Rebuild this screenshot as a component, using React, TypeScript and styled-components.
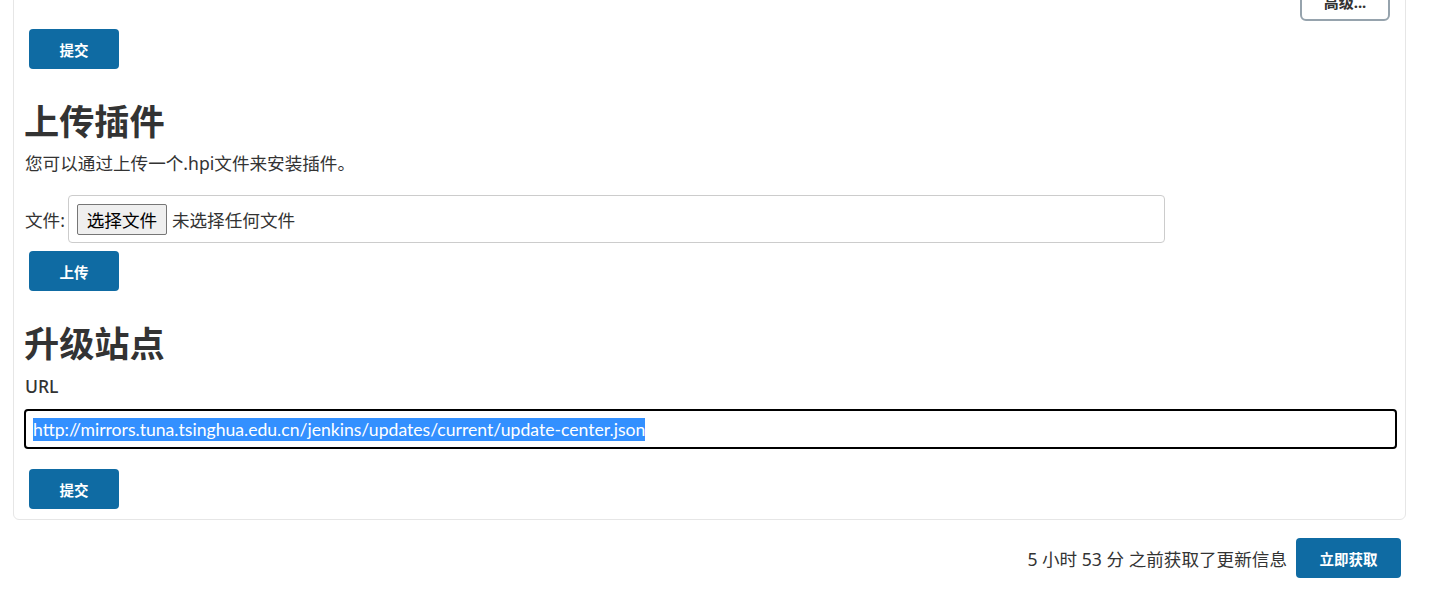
import React from "react";
import styled, { createGlobalStyle } from "styled-components";

const GlobalStyle = createGlobalStyle`
  html, body {
    margin: 0;
    padding: 0;
    background: #ffffff;
    overflow: hidden;
  }
  body {
    font-family: "Noto Sans", "Noto Sans CJK SC", sans-serif;
    font-size: 17.6px;
    color: #333333;
  }
`;

const Page = styled.div`
  display: flex;
  flex-direction: column;
  width: 1438px;
  height: 598px;
  overflow: hidden;
`;

const Card = styled.section`
  display: flex;
  flex-direction: column;
  align-items: flex-start;
  margin: -30px 0 0 13px;
  width: 1393px;
  box-sizing: border-box;
  padding: 0 10px 10px;
  border: 1px solid #e6e6e6;
  border-radius: 6px;
  background: #ffffff;
`;

const AdvancedRow = styled.div`
  display: flex;
  justify-content: flex-end;
  align-self: stretch;
  padding-right: 5px;
`;

const AdvancedButton = styled.button`
  width: 90px;
  height: 40px;
  margin-top: 10px;
  border: 2px solid #96a3ad;
  border-radius: 6px;
  background: #ffffff;
  color: #333333;
  font-family: "Noto Sans", "Noto Sans CJK SC", sans-serif;
  font-size: 15px;
  font-weight: 700;
`;

const PrimaryButton = styled.button<{ $top: number }>`
  display: flex;
  align-items: center;
  justify-content: center;
  width: 90px;
  height: 40px;
  margin: ${(p) => p.$top}px 0 0 5px;
  padding: 0;
  border: none;
  border-radius: 4px;
  background: #0f6ba3;
  color: #ffffff;
  font-family: "Noto Sans", "Noto Sans CJK SC", sans-serif;
  font-size: 14.5px;
  font-weight: 700;
  cursor: pointer;
`;

const Heading = styled.h2`
  margin: 31px 0 0 0;
  font-size: 35.2px;
  line-height: 42px;
  font-weight: 700;
  color: #333333;
`;

const Description = styled.p`
  margin: 8px 0 0 1px;
  line-height: 26px;
`;

const FileRow = styled.div`
  display: flex;
  align-items: center;
  gap: 3px;
  margin: 19px 0 0 1px;
`;

const FieldBox = styled.div`
  display: flex;
  align-items: center;
  gap: 5px;
  width: 1097px;
  height: 48px;
  box-sizing: border-box;
  padding: 0 8px;
  border: 1px solid #cccccc;
  border-radius: 4px;
`;

const ChooseButton = styled.span`
  display: flex;
  align-items: center;
  justify-content: center;
  width: 90px;
  height: 31px;
  box-sizing: border-box;
  border: 1px solid #767676;
  border-radius: 2px;
  background: #efefef;
  color: #000000;
  font-size: 17.6px;
`;

const NoFile = styled.span`
  color: #333333;
`;

const Label = styled.div`
  margin: 9px 0 0 1px;
  line-height: 26px;
  font-weight: 500;
`;

const UrlField = styled.div`
  display: flex;
  align-items: center;
  margin-top: 10px;
  width: 1373px;
  height: 40px;
  box-sizing: border-box;
  padding: 0 7px;
  border: 2px solid #000000;
  border-radius: 4px;
  font-family: "Lato", "Noto Sans", sans-serif;
  font-size: 17.6px;
`;

const Selected = styled.span`
  background: #3390ff;
  color: #ffffff;
  line-height: 23px;
`;

const Footer = styled.div`
  display: flex;
  justify-content: flex-end;
  align-items: center;
  gap: 9px;
  margin-top: 18px;
  padding-right: 37px;
`;

const Updated = styled.span`
  color: #333333;
`;

const FetchButton = styled(PrimaryButton)`
  width: 105px;
  margin: 0;
`;

export default function App() {
  return (
    <>
      <GlobalStyle />
      <Page>
        <Card>
          <AdvancedRow>
            <AdvancedButton>高级...</AdvancedButton>
          </AdvancedRow>
          <PrimaryButton $top={8}>提交</PrimaryButton>

          <Heading>上传插件</Heading>
          <Description>您可以通过上传一个.hpi文件来安装插件。</Description>
          <FileRow>
            <span>文件:</span>
            <FieldBox>
              <ChooseButton>选择文件</ChooseButton>
              <NoFile>未选择任何文件</NoFile>
            </FieldBox>
          </FileRow>
          <PrimaryButton $top={8}>上传</PrimaryButton>

          <Heading>升级站点</Heading>
          <Label>URL</Label>
          <UrlField>
            <Selected>
              http://mirrors.tuna.tsinghua.edu.cn/jenkins/updates/current/update-center.json
            </Selected>
          </UrlField>
          <PrimaryButton $top={20}>提交</PrimaryButton>
        </Card>
        <Footer>
          <Updated>5 小时 53 分 之前获取了更新信息</Updated>
          <FetchButton $top={0}>立即获取</FetchButton>
        </Footer>
      </Page>
    </>
  );
}
